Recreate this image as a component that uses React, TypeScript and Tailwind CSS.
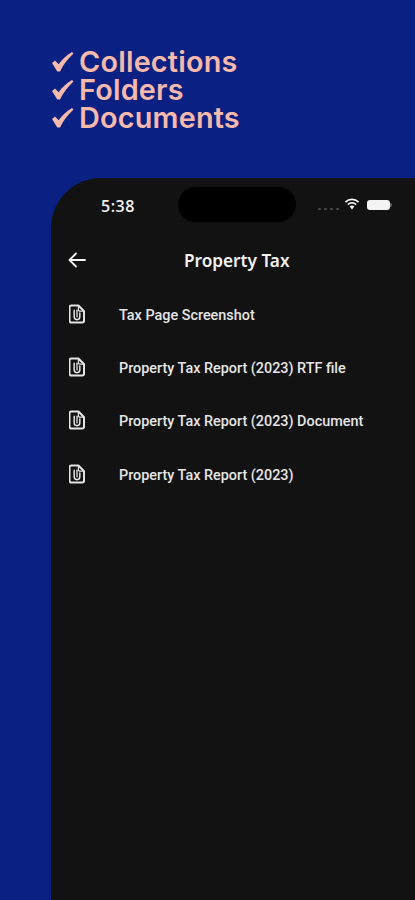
const files = [
  'Tax Page Screenshot',
  'Property Tax Report (2023) RTF file',
  'Property Tax Report (2023) Document',
  'Property Tax Report (2023)',
];

const features = ['Collections', 'Folders', 'Documents'];

function FileClipIcon() {
  return (
    <svg width="16" height="20" viewBox="0 0 17 20" fill="none" stroke="#e4e4e4" strokeLinecap="round" strokeLinejoin="round">
      <path d="M2.500 1h7.500l6 6v10a2 2 0 0 1-2 2h-11.500a2 2 0 0 1-2-2v-14a2 2 0 0 1 2-2z" strokeWidth="2.200" />
      <path d="M10 1.500v4a1.500 1.500 0 0 0 1.500 1.500h4" strokeWidth="1.300" />
      <path d="M5.500 6v7a3 3 0 0 0 6 0v-4" strokeWidth="1.600" />
      <path d="M8.500 6v7" strokeWidth="1.400" />
    </svg>
  );
}

function WifiIcon() {
  return (
    <svg width="16" height="12" viewBox="0 0 16 12" fill="#f2f2f2">
      <path d="M8 2.300c2.300 0 4.400.9 6 2.400l1.200-1.300A10.400 10.400 0 0 0 8 .5 10.400 10.400 0 0 0 .8 3.400L2 4.700a8.700 8.700 0 0 1 6-2.400z" />
      <path d="M8 5.800c1.300 0 2.500.5 3.500 1.400l1.200-1.300A6.900 6.900 0 0 0 8 4a6.900 6.900 0 0 0-4.700 1.900l1.200 1.300c1-.9 2.200-1.400 3.500-1.400z" />
      <path d="M8 7.600c-.9 0-1.700.3-2.300.9L8 11.500l2.300-3c-.6-.6-1.400-.9-2.300-.9z" />
    </svg>
  );
}

export default function App() {
  return (
    <div className="h-[900px] w-full overflow-hidden bg-[#0a2183] flex flex-col">
      <div className="h-[178px] pl-[51px] pt-[48px] shrink-0">
        {features.map((label) => (
          <div key={label} className="flex items-center h-[28px] text-[#f6b9ac]" style={{ fontFamily: 'Inter, sans-serif' }}>
            <svg width="24" height="22" viewBox="0 0 24 22" className="shrink-0 mr-[4px]" fill="#f6b9ac">
              <path d="M1 12l3-2.500 3.700 3.800C11 8.500 15 4.500 21 1l1.500 1.500C16.500 8 12.500 13.500 9 20.500H6.300z" />
            </svg>
            <span className="text-[28.800px] font-semibold leading-[28px] tracking-[0.2px]">{label}</span>
          </div>
        ))}
      </div>

      <div className="ml-[51px] flex-1 rounded-tl-[50px] bg-[#121212] relative" style={{ fontFamily: 'Roboto, sans-serif' }}>
        <div className="h-[58px] flex items-center relative">
          <span className="ml-[50px] -mt-[3px] text-[16px] font-semibold text-[#f2f2f2] tracking-[0.5px]" style={{ fontFamily: '"Open Sans", sans-serif' }}>5:38</span>
          <div className="absolute left-[127px] top-[9px] h-[35px] w-[118px] rounded-full bg-black" />
          <div className="absolute left-[267px] top-[30px] flex gap-[3px]">
            <span className="h-[2px] w-[3px] rounded-full bg-[#4a4a4a]" />
            <span className="h-[2px] w-[3px] rounded-full bg-[#4a4a4a]" />
            <span className="h-[2px] w-[3px] rounded-full bg-[#4a4a4a]" />
            <span className="h-[2px] w-[3px] rounded-full bg-[#4a4a4a]" />
          </div>
          <div className="absolute left-[293px] top-[20px]">
            <WifiIcon />
          </div>
          <div className="absolute left-[316px] top-[22px] flex items-center">
            <span className="h-[10px] w-[23px] rounded-[3px] bg-[#f4f4f4]" />
            <span className="h-[4px] w-[1.500px] rounded-r-sm bg-[#666]" />
          </div>
        </div>

        <div className="h-[50px] flex items-center relative">
          <svg width="18" height="16" viewBox="0 0 18 16" className="ml-[17px] -mt-[2px]" fill="none" stroke="#f4f4f4" strokeWidth="1.800" strokeLinecap="round" strokeLinejoin="round">
            <path d="M17 8H2M8 1.500L1.500 8 8 14.500" />
          </svg>
          <h1 className="absolute left-[133px] top-[13px] text-[17.200px] leading-[24px] font-semibold text-[#f2f2f2]" style={{ fontFamily: '"Noto Sans", sans-serif' }}>
            Property Tax
          </h1>
        </div>

        <ul className="pt-[3px]">
          {files.map((name) => (
            <li key={name} className="h-[53.300px] flex items-center">
              <span className="ml-[18px] w-[50px] shrink-0 -mt-[4px]">
                <FileClipIcon />
              </span>
              <span className="text-[14.400px] font-medium text-[#e6e6e6] whitespace-nowrap">{name}</span>
            </li>
          ))}
        </ul>
      </div>
    </div>
  );
}
